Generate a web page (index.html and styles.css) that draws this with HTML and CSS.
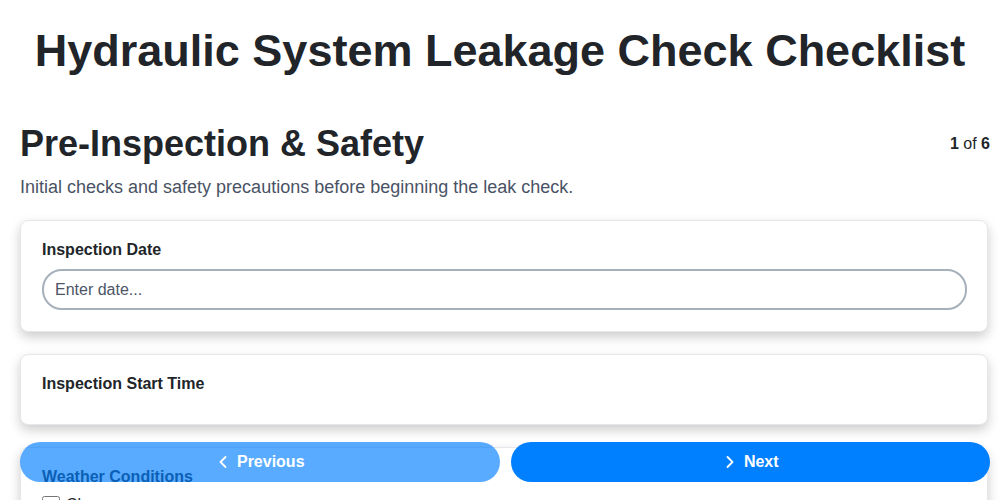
FILE: index.html
```html
<!DOCTYPE html>
<html lang="en">
<head>
    <meta charset="UTF-8">
    <meta name="viewport" content="width=device-width, initial-scale=1.0">
    <title>Hydraulic System Leakage Check Checklist</title>
    <link rel="stylesheet" href="styles.css">
</head>
<body>

    <h1 id="title">Hydraulic System Leakage Check Checklist</h1>

    <!-- current section -->
    <div id="section">
        <div class="section-head">
            <h2 id="section-title">Pre-Inspection &amp; Safety</h2>
            <span class="step"><b>1</b> of <b>6</b></span>
        </div>
        <p class="section-desc">Initial checks and safety precautions before beginning the leak check.</p>

        <div class="card">
            <label class="field-label" for="date">Inspection Date</label>
            <input type="text" id="date" class="field-input" placeholder="Enter date...">
        </div>

        <div class="card">
            <label class="field-label">Inspection Start Time</label>
        </div>

        <div class="card">
            <label class="field-label">Weather Conditions</label>
            <label class="check"><input type="checkbox"> Clear</label>
            <label class="check"><input type="checkbox"> Rain</label>
        </div>
    </div>

    <!-- nav buttons -->
    <div class="nav">
        <button type="button" class="nav-btn prev">
            <svg width="16" height="16" viewBox="0 0 16 16"><path d="M10.5 3 L5.5 8 L10.5 13" fill="none" stroke="#fff" stroke-width="1.8" stroke-linecap="round" stroke-linejoin="round"/></svg>
            Previous
        </button>
        <button type="button" class="nav-btn next">
            <svg width="16" height="16" viewBox="0 0 16 16"><path d="M5.5 3 L10.5 8 L5.5 13" fill="none" stroke="#fff" stroke-width="1.8" stroke-linecap="round" stroke-linejoin="round"/></svg>
            Next
        </button>
    </div>

</body>
</html>
```

FILE: styles.css
```css
*{
    margin: 0;
    padding: 0;
    box-sizing: border-box;
}
body{
    font-family: "Liberation Sans", Arial, sans-serif;
    color: #212529;
    background: #fff;
    padding: 0 12px 80px 20px;
}
#title{
    text-align: center;
    font-size: 45px;
    line-height: 1.2;
    padding: 24px 8px 0 0;
    margin-bottom: 44px;
}
.section-head{
    display: flex;
    justify-content: space-between;
    align-items: center;
}
#section-title{
    font-size: 36px;
    line-height: 1.2;
}
.step{
    font-size: 16px;
    margin-right: -2px;
}
.section-desc{
    font-size: 18px;
    color: #495365;
    margin-top: 12px;
    margin-bottom: 22px;
}
.card{
    background: #fff;
    border: 1px solid #e6e6ec;
    border-radius: 8px;
    box-shadow: 0 5px 12px rgba(0, 0, 0, 0.2);
    padding: 20px 20px 21px 21px;
    margin-bottom: 22px;
    display: flex;
    flex-direction: column;
}
.field-label{
    font-size: 16px;
    font-weight: bold;
    margin-bottom: 10px;
}
.field-input{
    height: 41px;
    border: 2px solid #a6b0ba;
    border-radius: 20px;
    padding: 0 11px;
    font-size: 16px;
    font-family: inherit;
    color: #212529;
    outline: none;
}
.field-input::placeholder{
    color: #4d5566;
}
.card:nth-child(4){
    min-height: 70px;
}
.check{
    display: flex;
    align-items: center;
    gap: 6px;
    font-size: 16px;
    margin-bottom: 6px;
}
.check input{
    width: 18px;
    height: 18px;
}
.nav{
    position: fixed;
    left: 20px;
    right: 10px;
    bottom: 18px;
    display: flex;
    gap: 11px;
}
.nav-btn{
    flex: 1;
    height: 40px;
    border: none;
    border-radius: 20px;
    background: #007fff;
    color: #fff;
    font-family: inherit;
    font-size: 16px;
    font-weight: bold;
    display: flex;
    align-items: center;
    justify-content: center;
    gap: 6px;
    cursor: pointer;
}
.nav-btn.prev{
    opacity: 0.65;
}
```
